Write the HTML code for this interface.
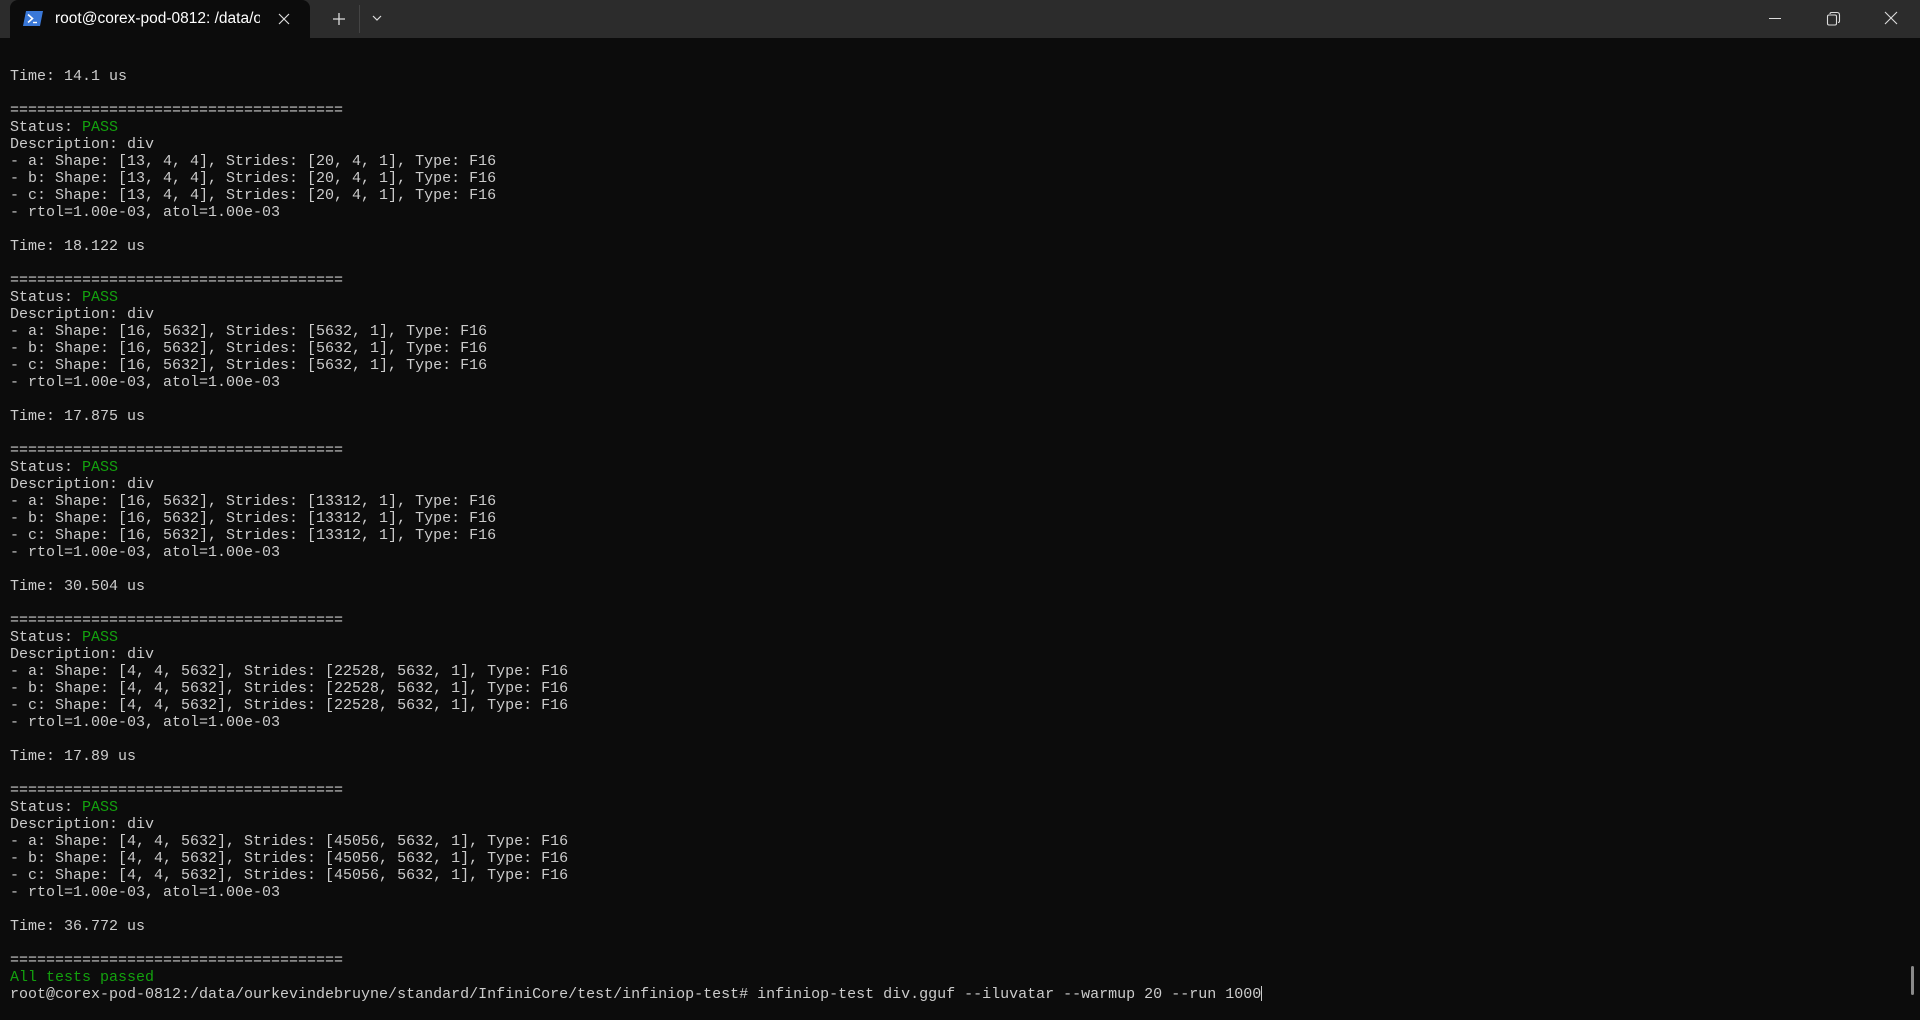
<!DOCTYPE html>
<html><head><meta charset="utf-8"><style>
html,body{margin:0;padding:0;width:1920px;height:1020px;overflow:hidden;background:#0c0c0c;}
#bar{position:absolute;left:0;top:0;width:1920px;height:38px;background:#2c2c2c;}
#tab{position:absolute;left:10px;top:0;width:300px;height:38px;background:#0c0c0c;border-radius:8px 8px 0 0;}
#title{position:absolute;left:45px;top:10px;font:15.5px "Liberation Sans",sans-serif;color:#fff;white-space:nowrap;width:205px;overflow:hidden;}
#term{position:absolute;left:10px;top:68px;font:15px/17px "Liberation Mono",monospace;color:#cccccc;white-space:pre;margin:0;}
.g{color:#13a10e;}
svg{position:absolute;}
</style></head><body>
<div id="bar"></div>
<div id="tab">
<svg style="left:13px;top:11px" width="20" height="15" viewBox="0 0 20 15"><polygon points="3,0 20,0 17,15 0,15" fill="#3a78d8"/><path d="M5 3.5 L9.5 7.5 L5 11.5" stroke="#fff" stroke-width="1.6" fill="none"/><path d="M10 11.5 H14" stroke="#fff" stroke-width="1.4"/></svg>
<div id="title">root@corex-pod-0812: /data/ourkevindebruyne</div>
<svg style="left:267px;top:12px" width="14" height="14" viewBox="0 0 14 14"><path d="M2 2 L12 12 M12 2 L2 12" stroke="#ddd" stroke-width="1.2"/></svg>
</div>
<svg style="left:332px;top:12px" width="14" height="14" viewBox="0 0 14 14"><path d="M7 1 V13 M1 7 H13" stroke="#ddd" stroke-width="1.3"/></svg>
<div style="position:absolute;left:359px;top:5px;width:1px;height:28px;background:#444"></div>
<svg style="left:371px;top:14px" width="12" height="8" viewBox="0 0 12 8"><path d="M2 2 L6 6 L10 2" stroke="#ddd" stroke-width="1.2" fill="none"/></svg>
<svg style="left:1768px;top:12px" width="14" height="14" viewBox="0 0 14 14"><path d="M1 6.5 H13" stroke="#ddd" stroke-width="1"/></svg>
<svg style="left:1826px;top:11px" width="16" height="16" viewBox="0 0 16 16"><rect x="1.5" y="4" width="9" height="10" rx="1.5" stroke="#ddd" stroke-width="1.1" fill="none"/><path d="M4 3 Q4 1.5 5.5 1.5 H11 Q13.5 1.5 13.5 4 V10 Q13.5 11.5 12 11.5" stroke="#ddd" stroke-width="1.1" fill="none"/></svg>
<svg style="left:1884px;top:11px" width="14" height="14" viewBox="0 0 14 14"><path d="M1 1 L13 13 M13 1 L1 13" stroke="#ddd" stroke-width="1.1"/></svg>
<pre id="term">Time: 14.1 us

=====================================
Status: <span class="g">PASS</span>
Description: div
- a: Shape: [13, 4, 4], Strides: [20, 4, 1], Type: F16
- b: Shape: [13, 4, 4], Strides: [20, 4, 1], Type: F16
- c: Shape: [13, 4, 4], Strides: [20, 4, 1], Type: F16
- rtol=1.00e-03, atol=1.00e-03

Time: 18.122 us

=====================================
Status: <span class="g">PASS</span>
Description: div
- a: Shape: [16, 5632], Strides: [5632, 1], Type: F16
- b: Shape: [16, 5632], Strides: [5632, 1], Type: F16
- c: Shape: [16, 5632], Strides: [5632, 1], Type: F16
- rtol=1.00e-03, atol=1.00e-03

Time: 17.875 us

=====================================
Status: <span class="g">PASS</span>
Description: div
- a: Shape: [16, 5632], Strides: [13312, 1], Type: F16
- b: Shape: [16, 5632], Strides: [13312, 1], Type: F16
- c: Shape: [16, 5632], Strides: [13312, 1], Type: F16
- rtol=1.00e-03, atol=1.00e-03

Time: 30.504 us

=====================================
Status: <span class="g">PASS</span>
Description: div
- a: Shape: [4, 4, 5632], Strides: [22528, 5632, 1], Type: F16
- b: Shape: [4, 4, 5632], Strides: [22528, 5632, 1], Type: F16
- c: Shape: [4, 4, 5632], Strides: [22528, 5632, 1], Type: F16
- rtol=1.00e-03, atol=1.00e-03

Time: 17.89 us

=====================================
Status: <span class="g">PASS</span>
Description: div
- a: Shape: [4, 4, 5632], Strides: [45056, 5632, 1], Type: F16
- b: Shape: [4, 4, 5632], Strides: [45056, 5632, 1], Type: F16
- c: Shape: [4, 4, 5632], Strides: [45056, 5632, 1], Type: F16
- rtol=1.00e-03, atol=1.00e-03

Time: 36.772 us

=====================================
<span class="g">All tests passed</span>
root@corex-pod-0812:/data/ourkevindebruyne/standard/InfiniCore/test/infiniop-test# infiniop-test div.gguf --iluvatar --warmup 20 --run 1000<span style="display:inline-block;width:1px;height:15px;background:#ccc;vertical-align:-3px"></span></pre>
<div style="position:absolute;left:1911px;top:966px;width:3px;height:29px;background:#8a8a8a;border-radius:2px"></div>
</body></html>
